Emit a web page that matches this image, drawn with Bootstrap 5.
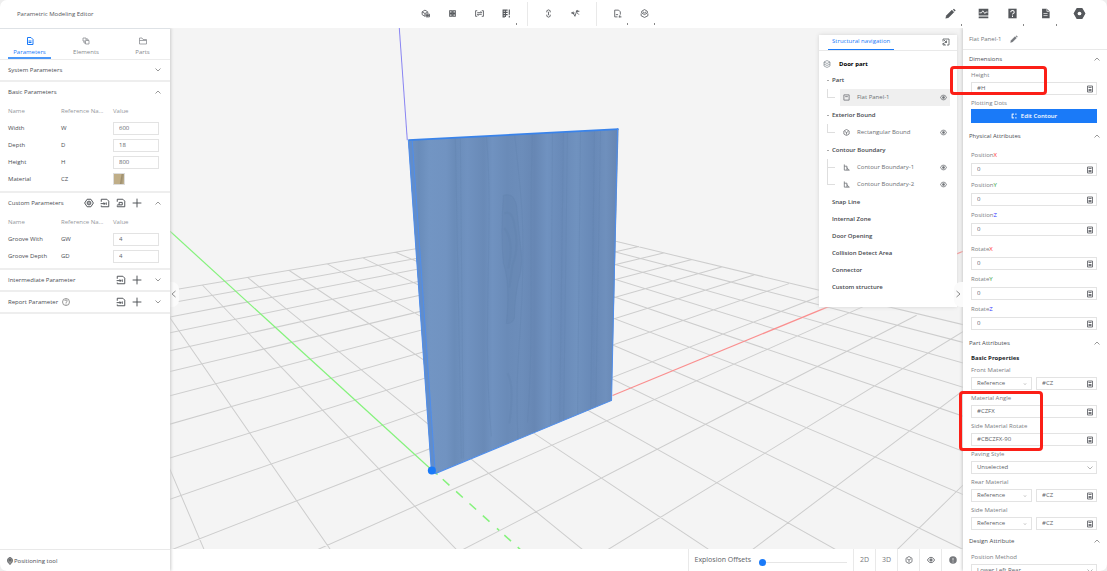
<!DOCTYPE html>
<html lang="en">
<head>
<meta charset="utf-8">
<meta name="viewport" content="width=device-width, initial-scale=1">
<title>Parametric Modeling Editor</title>
<link rel="stylesheet" href="https://cdn.jsdelivr.net/npm/bootstrap@5.3.0/dist/css/bootstrap.min.css">
<style>
:root{--ink:#4a4d52;--soft:#85888d;--line:#e8e8e8;--blue:#1a7af8}
body{font:6px/12px "Open Sans","Noto Sans",sans-serif;color:var(--ink);background:#eee}
button{border:0;background:none;padding:0;color:inherit;line-height:inherit}
a{color:inherit;text-decoration:none}
label{display:block}
svg.ic{width:10px;height:10px;fill:none;stroke:currentColor;stroke-width:1.5;flex:none;display:block}
svg.ic-sm{width:8px;height:8px}
svg.ic-lg{width:13px;height:13px}
.app{height:100vh;border-radius:7px;background:#fff}
.topbar{height:28px;color:#55585c}
.app-title{flex:0 0 38%;padding-left:17px;font-size:6px}
.tools{gap:18px}
.tools svg.ic{width:9px;height:9px}
.tools .sep{width:1px;height:24px;background:#e9e9e9;margin:0 -2px}
.tool{position:relative}
.tool.more::after{content:"";position:absolute;right:-6px;bottom:-7px;width:1px;height:2px;background:#888}
.tools-end{gap:18px;padding-right:21px}
.tools-end svg.ic{width:11px;height:11px}
.tools-end svg.ic-lg{width:13px;height:13px}
.side{width:170px;background:#fff;z-index:2;box-shadow:1px 0 3px #ccc}
.tabs{height:31px;border-bottom:1px solid #ececec;padding:0 6px 0 8px}
.tab{width:43px;color:var(--soft);border-bottom:2px solid transparent}
.tab.on{color:var(--blue);border-color:#4a97f8}
.tab svg.ic{margin:0 auto 1px;width:8px;height:8px}
.sect{border-bottom:2px solid #eeeeee}
.sect.filled{padding-bottom:3px}
.sect-h{height:20px;padding:0 8px}
.sect-h > .ic-sm{color:#777}
.sect-h .acts{gap:6px}
.ptable{table-layout:fixed;width:100%;margin:1px 0 0}
.ptable th,.ptable td{height:17px;padding:0;vertical-align:middle;font-weight:400}
.ptable th:first-child,.ptable td:first-child{padding-left:8px}
.ptable th:first-child{width:61px}
.ptable th:nth-child(2){width:52px}
.ptable thead th{color:#94979c}
.field{width:100%;height:13px;border:1px solid #e3e3e3;border-radius:0;padding:0 5px;background:#fff;color:#606368;font:6px/11px "Open Sans","Noto Sans",sans-serif;outline:0;appearance:none}
.ptable .field{width:46px;display:block}
.swatch{width:12px;height:12px;border:1px solid #ddd;background:linear-gradient(100deg,#c0ae88 60%,#9c8d6c 70%,#c4b593);display:block}
.side-foot{height:22px;border-top:1px solid #e9e9e9;padding-left:6px}
.stage{background:#f4f4f4;min-height:0}
.scene{position:absolute;inset:0;width:100%;height:100%}
.handle{position:absolute;top:254px;width:9px;height:25px;background:#fbfbfb;color:#666;z-index:1}
.handle.l{left:0;border-radius:0 7px 7px 0}
.handle.r{right:0;border-radius:7px 0 0 7px;z-index:4}
.navbox{position:absolute;right:6px;top:7px;width:138px;height:272px;background:#fff;box-shadow:0 0 4px #d4d4d4;z-index:3}
.navbox-h{height:16px;border-bottom:1px solid #e9e9e9;padding:0 7px 0 9px}
.navbox-h a{height:16px;line-height:14px;padding:0 4px;color:var(--blue);border-bottom:1px solid var(--blue)}
.tree{padding:5px 7px 0 4px}
.tree ul{list-style:none;margin:0;padding:0}
.tree > ul{margin-top:-1px}
.tree .row-t{height:17px;line-height:17px}
.grp{padding-left:9px;font-weight:600;color:#44474c}
.grp.open::before{content:"";width:2px;height:1px;background:#aaa;position:absolute;left:4px;top:8px}
.kids{margin:0 0 1px 4px!important}
.kids li{border-left:1px solid #dedede;position:relative}
.kids li:last-child{border-color:transparent}
.kids li::before{content:"";position:absolute;left:-1px;top:0;width:8px;height:9px;border-bottom:1px solid #dedede}
.kids li:last-child::before{border-left:1px solid #dedede}
.leaf{margin-left:12px;padding:0 3px;color:#6c6f74}
.leaf svg.ic-sm{width:7px;height:7px}
.leaf svg:first-child{margin-right:7px}
.leaf.on{background:#efefef}
.props{width:144px;background:#fff;z-index:2;box-shadow:-1px 0 3px #ccc;padding-top:2px}
.props .head{height:20px;padding-left:6px;border-bottom:1px solid #e9e9e9;color:#74777c}
.props .sect-p{height:18px;padding:0 6px}
.props .sect-p .ic{color:#777}
.pf{padding:0 10px 0 8px;color:#7a7d82}
.pf .box{position:relative}
.pf .box .ic{position:absolute;right:3px;top:3px;color:#66696e}
.pf .box .ic.caret{color:#999}
.tight label{margin-bottom:1px}
.tight .pf{margin-bottom:2px}
.tight.first{padding-top:1px}
.wide{padding-top:3px}
.wide label{line-height:15px}
.wide .pf{margin-bottom:2px}
.axx{color:#f33}.axy{color:#2a9c35}.axz{color:#33f}
.bluebtn{width:100%;height:14px;background:var(--blue);color:#fff;font-weight:600;line-height:14px}
.bluebtn svg.ic{width:6px;height:6px}
.note{position:absolute;border:3px solid #fb1f17;border-radius:4px;z-index:5;pointer-events:none}
.note-a{right:60px;top:66px;width:97px;height:29px}
.note-b{right:64px;top:391px;width:84px;height:60px}
.foot{height:22px;background:#fff;box-shadow:0 -1px 0 #e8e8e8}
.foot .cell{border-left:1px solid #e9e9e9;width:22px;height:22px;color:#77797d;font-size:7px}
.foot .slide{border-left:1px solid #e9e9e9;padding:0 6px;font-size:7px;gap:8px;line-height:22px;color:#606368}
input[type=range]{appearance:none;width:88px;height:8px;background:linear-gradient(#e6e6e6,#e6e6e6) center/100% 1px no-repeat;margin:4px 0 0}
input[type=range]::-webkit-slider-thumb{appearance:none;width:7px;height:7px;border-radius:50%;background:var(--blue)}
</style>
</head>
<body>
<svg class="d-none">
<symbol id="down" viewBox="0 0 16 16"><path d="M3 5l5 5 5-5"/></symbol>
<symbol id="up" viewBox="0 0 16 16"><path d="M3 11l5-5 5 5"/></symbol>
<symbol id="left" viewBox="0 0 16 16"><path d="M11 2L4 8l7 6"/></symbol>
<symbol id="right" viewBox="0 0 16 16"><path d="M5 2l7 6-7 6"/></symbol>
<symbol id="plus" viewBox="0 0 16 16"><path d="M8 1v14M1 8h14"/></symbol>
<symbol id="doc" viewBox="0 0 16 16"><path d="M3 1h7l4 4v10H3zM5 8h6M5 11h6" stroke-width="2"/></symbol>
<symbol id="elem" viewBox="0 0 16 16"><path d="M6 8H2V2h6v4M7 7h7v7H7zM8 4h4v3M4 8v4h3"/></symbol>
<symbol id="folder" viewBox="0 0 16 16"><path d="M1 14V2h5l2 3h7v9zM1 7h14"/></symbol>
<symbol id="target" viewBox="0 0 16 16"><path d="M5 2h6l4 6-4 6H5L1 8z"/><circle cx="8" cy="8" r="3"/><circle cx="8" cy="8" r=".7"/></symbol>
<symbol id="import" viewBox="0 0 16 16"><path d="M2 6V2h9l3 3v9H2v-2M1 9h7M10 7v4M6 7l2 2-2 2"/></symbol>
<symbol id="export" viewBox="0 0 16 16"><path d="M2 6V2h9l3 3v9H2v-2M5 11V7h5v4H2"/></symbol>
<symbol id="help" viewBox="0 0 16 16"><circle cx="8" cy="8" r="7"/><path d="M5.500 6c0-3 5-3 5 0 0 2-2.500 1.500-2.500 4M8 11v2"/></symbol>
<symbol id="cube" viewBox="0 0 16 16"><path d="M8 1l6 3.500v7L8 15l-6-3.500v-7zM4 5.500L8 8l4-2.500M8 8v5" stroke-width="1.800"/></symbol>
<symbol id="cubes" viewBox="0 0 16 16"><path d="M7 13l-5-3V5l5-3 5 3v3M2 5l5 3 4-2M7 8v5"/><path d="M9 9h6v5H9zM9 11.500h6M12 9v5"/></symbol>
<symbol id="four" viewBox="0 0 16 16"><path d="M3 3h4v4H3zM9 3h4v4H9zM3 9h4v4H3zM9 9h4v4H9z" stroke-width="1.800"/></symbol>
<symbol id="vars" viewBox="0 0 16 16"><path d="M4 3H1v10h3M12 3h3v10h-3M4 6.500h8M4 9.500h8M10 4l2 2.500M6 12L4 9.500"/></symbol>
<symbol id="rows" viewBox="0 0 16 16"><path d="M1 2h9M1 6h9M1 10h9M2 2v12h3M6 2v12M13 1v9M13 12v3" stroke-width="2"/></symbol>
<symbol id="chain" viewBox="0 0 16 16"><path d="M5 6V3l3-1.500L11 3v3M5 10v3l3 1.500 3-1.500v-3M8 5v6"/></symbol>
<symbol id="wave" viewBox="0 0 16 16"><path d="M0 7h4l3 6 3-9h5"/><circle cx="4" cy="7" r="1.500"/><circle cx="11" cy="4" r="1.500"/><path d="M11 7l3 3"/></symbol>
<symbol id="docplus" viewBox="0 0 16 16"><path d="M8 14H3V2h7l3 3v5M5 10h4M12 11v4M10 14h5"/></symbol>
<symbol id="stack" viewBox="0 0 16 16"><path d="M8 1l5 3v3L8 10 3 7V4zM5 5l3 2 3-2M2 8v4l6 3 6-3V8"/></symbol>
<symbol id="layers" viewBox="0 0 16 16"><path d="M8 1l6 3-6 3-6-3zM2 8l6 3 6-3M2 12l6 3 6-3M2 4v8M14 4v8" stroke-width="1.200"/></symbol>
<symbol id="pen" viewBox="0 0 16 16"><path d="M1 15l1-4 8-8 3 3-8 8z" fill="currentColor" stroke-width=".5"/><path d="M11.500 2l1.500-1 2.500 2.500L14 5z" fill="currentColor" stroke="none"/></symbol>
<symbol id="monitor" viewBox="0 0 16 16"><path d="M1 1h14v10H1zM1 12.500h14V15H1z" fill="currentColor" stroke="none"/><path d="M2 7h3l2-3 3 4 1.500-2H14" stroke="#fff" stroke-width="1.300"/></symbol>
<symbol id="qbox" viewBox="0 0 16 16"><path d="M2 1h12v14H2z" fill="currentColor" stroke="none"/><path d="M5.500 6c0-3.500 5-3 5 0 0 2-2.500 1.500-2.500 3.500M8 11v2" stroke="#fff"/></symbol>
<symbol id="file" viewBox="0 0 16 16"><path d="M3 1h7l4 4v10H3z" fill="currentColor" stroke="none"/><path d="M10 1v4h4M5 8h6M5 11h6" stroke="#fff" stroke-width="1"/></symbol>
<symbol id="nut" viewBox="0 0 16 16"><path d="M5 2h6l3.500 6L11 14H5L1.500 8z" fill="currentColor"/><circle cx="8" cy="8" r="2.300" fill="#fff" stroke="none"/></symbol>
<symbol id="calc" viewBox="0 0 16 16"><path d="M3 2h10v12H3zM5 5h6M5 9h6M5 11h6" stroke-width="1.800"/></symbol>
<symbol id="panel" viewBox="0 0 16 16"><path d="M2 2h12v12H2zM5 6h6" stroke-width="1.800"/></symbol>
<symbol id="contour" viewBox="0 0 16 16"><path d="M3 1v13h12M3 5h6v9M9 8l4 6" stroke-width="1.800"/></symbol>
<symbol id="eye" viewBox="0 0 16 16"><path d="M1 8c3-7 11-7 14 0-3 7-11 7-14 0z" stroke-width="2"/><circle cx="8" cy="8" r="2.500" fill="currentColor"/></symbol>
<symbol id="dock" viewBox="0 0 16 16"><path d="M2 7V2h12v12h-4M4 4l5 5M9 5v4H5M2 10l5 4H2z"/></symbol>
<symbol id="pin" viewBox="0 0 16 16"><path d="M8 15C0 9 3 1 8 1s8 8 0 14z" fill="#999"/><circle cx="8" cy="6" r="2"/></symbol>
<symbol id="info" viewBox="0 0 16 16"><circle cx="8" cy="8" r="7.500" fill="currentColor" stroke="none"/><path d="M8 4v5M8 11v2" stroke="#fff"/></symbol>
<symbol id="dots" viewBox="0 0 16 16"><path d="M3 2v12M3 3h5M3 13h5M11 3h4M11 13h4" stroke-width="2.500"/></symbol>
<symbol id="dot" viewBox="0 0 16 16"><path d="M6 7l2 2 2-2"/></symbol>
</svg>

<div class="app position-relative d-flex flex-column overflow-hidden">
  <header class="topbar d-flex align-items-center">
    <div class="app-title">Parametric Modeling Editor</div>
    <div class="tools d-flex align-items-center">
      <button class="tool" aria-label="Models"><svg class="ic"><use href="#cubes"/></svg></button>
      <button class="tool" aria-label="Grid"><svg class="ic"><use href="#four"/></svg></button>
      <button class="tool" aria-label="Variables"><svg class="ic"><use href="#vars"/></svg></button>
      <button class="tool more" aria-label="Align"><svg class="ic"><use href="#rows"/></svg></button>
      <span class="sep"></span>
      <button class="tool" aria-label="Link"><svg class="ic"><use href="#chain"/></svg></button>
      <button class="tool" aria-label="Curve"><svg class="ic"><use href="#wave"/></svg></button>
      <span class="sep"></span>
      <button class="tool more" aria-label="New"><svg class="ic"><use href="#docplus"/></svg></button>
      <button class="tool more" aria-label="Stack"><svg class="ic"><use href="#stack"/></svg></button>
    </div>
    <div class="tools-end d-flex align-items-center ms-auto">
      <button class="tool more me-1" aria-label="Edit"><svg class="ic"><use href="#pen"/></svg></button>
      <button class="tool" aria-label="Monitor"><svg class="ic"><use href="#monitor"/></svg></button>
      <button class="tool more me-1" aria-label="Help"><svg class="ic"><use href="#qbox"/></svg></button>
      <button class="tool more me-1" aria-label="File"><svg class="ic"><use href="#file"/></svg></button>
      <button class="tool" aria-label="Settings"><svg class="ic ic-lg"><use href="#nut"/></svg></button>
    </div>
  </header>

  <div class="d-flex flex-grow-1 overflow-hidden">
    <aside class="side d-flex flex-column flex-shrink-0 border-top">
      <nav class="tabs d-flex justify-content-between align-items-stretch text-center">
        <a href="#" class="tab on pt-2"><svg class="ic"><use href="#doc"/></svg>Parameters</a>
        <a href="#" class="tab pt-2"><svg class="ic"><use href="#elem"/></svg>Elements</a>
        <a href="#" class="tab pt-2"><svg class="ic"><use href="#folder"/></svg>Parts</a>
      </nav>
      <section class="sect">
        <div class="sect-h d-flex align-items-center justify-content-between">System Parameters<svg class="ic ic-sm"><use href="#down"/></svg></div>
      </section>
      <section class="sect filled">
        <div class="sect-h d-flex align-items-center justify-content-between">Basic Parameters<svg class="ic ic-sm"><use href="#up"/></svg></div>
        <table class="ptable">
          <thead><tr><th>Name</th><th>Reference Na...</th><th>Value</th></tr></thead>
          <tbody>
            <tr><td>Width</td><td>W</td><td><input class="field" aria-label="Width" value="600"></td></tr>
            <tr><td>Depth</td><td>D</td><td><input class="field" aria-label="Depth" value="18"></td></tr>
            <tr><td>Height</td><td>H</td><td><input class="field" aria-label="Height" value="800"></td></tr>
            <tr><td>Material</td><td>CZ</td><td><button class="swatch" aria-label="Material"></button></td></tr>
          </tbody>
        </table>
      </section>
      <section class="sect filled">
        <div class="sect-h d-flex align-items-center">Custom Parameters
          <span class="acts d-flex align-items-center ms-auto me-2 pe-1"><svg class="ic"><use href="#target"/></svg><svg class="ic"><use href="#import"/></svg><svg class="ic"><use href="#export"/></svg><svg class="ic"><use href="#plus"/></svg></span>
          <svg class="ic ic-sm"><use href="#up"/></svg></div>
        <table class="ptable">
          <thead><tr><th>Name</th><th>Reference Na...</th><th>Value</th></tr></thead>
          <tbody>
            <tr><td>Groove With</td><td>GW</td><td><input class="field" aria-label="Groove With" value="4"></td></tr>
            <tr><td>Groove Depth</td><td>GD</td><td><input class="field" aria-label="Groove Depth" value="4"></td></tr>
          </tbody>
        </table>
      </section>
      <section class="sect">
        <div class="sect-h d-flex align-items-center">Intermediate Parameter
          <span class="acts d-flex align-items-center ms-auto me-2 pe-1"><svg class="ic"><use href="#import"/></svg><svg class="ic"><use href="#plus"/></svg></span>
          <svg class="ic ic-sm"><use href="#down"/></svg></div>
      </section>
      <section class="sect">
        <div class="sect-h d-flex align-items-center">Report Parameter<svg class="ic ic-sm ms-1"><use href="#help"/></svg>
          <span class="acts d-flex align-items-center ms-auto me-2 pe-1"><svg class="ic"><use href="#import"/></svg><svg class="ic"><use href="#plus"/></svg></span>
          <svg class="ic ic-sm"><use href="#down"/></svg></div>
      </section>
      <a href="#" class="side-foot d-flex align-items-center mt-auto"><svg class="ic ic-sm"><use href="#pin"/></svg>Positioning tool</a>
    </aside>

    <main class="flex-grow-1 d-flex flex-column overflow-hidden">
      <div class="stage position-relative flex-grow-1 overflow-hidden">
        <svg class="scene" viewBox="0 0 792 521" preserveAspectRatio="xMidYMin slice">
          <defs>
            <linearGradient id="wood" x1="0" x2="1" y1="0" y2="0">
              <stop offset="0" stop-color="#7092c0"/><stop offset=".05" stop-color="#698cba"/><stop offset=".1" stop-color="#7295c3"/><stop offset=".18" stop-color="#7193c1"/><stop offset=".22" stop-color="#6a8cb9"/><stop offset=".28" stop-color="#7092c0"/><stop offset=".36" stop-color="#698ab7"/><stop offset=".4" stop-color="#7092c0"/><stop offset=".47" stop-color="#6a8bb8"/><stop offset=".54" stop-color="#6c8dba"/><stop offset=".6" stop-color="#6787b4"/><stop offset=".66" stop-color="#7092c0"/><stop offset=".73" stop-color="#698ab8"/><stop offset=".8" stop-color="#7092bf"/><stop offset=".88" stop-color="#6889b7"/><stop offset=".94" stop-color="#6f90bd"/><stop offset="1" stop-color="#6685b1"/>
            </linearGradient>
            <clipPath id="face"><path d="M242 113L448 101 441 372 265 445z"/></clipPath>
          </defs>
          <g id="grid" fill="none" stroke="#cdcdcd" stroke-width="1"></g>
          <path d="M229 0L237 112" stroke="#8a85f2"/>
          <path d="M0 203L262 442" stroke="#85f27c" stroke-width="1.200"/>
          <path d="M442 367L792 223" stroke="#fa8f8f" stroke-width="1.200"/>
          <path d="M265 444L350 521" stroke="#85f27c" stroke-width="1.500" stroke-dasharray="3 7 9 9 9 9 9 9 9 10"/>
          <path d="M238 112L448 101 441 372 265 445 261 442z" fill="url(#wood)"/>
          <path d="M238 112L242 113 265 445 261 442z" fill="#638dc8"/>
          <g clip-path="url(#face)" fill="none" stroke="#5f80ad" stroke-opacity=".3">
            <path d="M285 110l6 320M290 110l3 320M316 108c8 90-5 190 5 300M344 104c6 60 10 80 8 150s-8 80-4 170M362 104c-4 110 2 200-5 290M382 103l-2 300M393 103l-4 300M397 103l-4 300M410 102l-3 290M424 102l-4 290M430 102l-5 290"/>
            <path d="M333 167q10-3 13 10 2 20 4 40 3 20-2 35-4 20-4 38-3 6-8 5 4-40-3-60-3-30 0-68z" fill="#5f80ad" fill-opacity=".25"/>
            <path d="M334 185q8-3 10 12 5 22-2 40-2 15-3 22M334 200q10 12 4 40M337 345q7 10 2 50" stroke-width="2"/>
          </g>
          <path d="M238 112L448 101" stroke="#3983ea" stroke-width="1.800"/>
          <path d="M447 100L441 372 265 445 261 442 238 112M242 113L265 445" fill="none" stroke="#4f8eec" stroke-width="1"/>
          <circle cx="261.500" cy="442" r="4" fill="#1a7af8"/>
        </svg>
        <button class="handle l" aria-label="Collapse left panel"><svg class="ic ic-sm"><use href="#left"/></svg></button>
        <button class="handle r" aria-label="Collapse right panel"><svg class="ic ic-sm"><use href="#right"/></svg></button>

        <div class="navbox">
          <div class="navbox-h d-flex align-items-center justify-content-between"><a href="#">Structural navigation</a><svg class="ic ic-sm"><use href="#dock"/></svg></div>
          <div class="tree">
            <div class="row-t d-flex align-items-center fw-bold text-black"><svg class="ic ic-sm me-2 text-secondary"><use href="#layers"/></svg>Door part</div>
            <ul>
              <li class="position-relative"><div class="row-t grp open">Part</div>
                <ul class="kids"><li><div class="row-t leaf on d-flex align-items-center"><svg class="ic ic-sm"><use href="#panel"/></svg>Flat Panel-1<svg class="ic ic-sm ms-auto"><use href="#eye"/></svg></div></li></ul></li>
              <li class="position-relative"><div class="row-t grp open">Exterior Bound</div>
                <ul class="kids"><li><div class="row-t leaf d-flex align-items-center"><svg class="ic ic-sm"><use href="#cube"/></svg>Rectangular Bound<svg class="ic ic-sm ms-auto"><use href="#eye"/></svg></div></li></ul></li>
              <li class="position-relative"><div class="row-t grp open">Contour Boundary</div>
                <ul class="kids">
                  <li><div class="row-t leaf d-flex align-items-center"><svg class="ic ic-sm"><use href="#contour"/></svg>Contour Boundary-1<svg class="ic ic-sm ms-auto"><use href="#eye"/></svg></div></li>
                  <li><div class="row-t leaf d-flex align-items-center"><svg class="ic ic-sm"><use href="#contour"/></svg>Contour Boundary-2<svg class="ic ic-sm ms-auto"><use href="#eye"/></svg></div></li></ul></li>
              <li class="row-t grp">Snap Line</li>
              <li class="row-t grp">Internal Zone</li>
              <li class="row-t grp">Door Opening</li>
              <li class="row-t grp">Collision Detect Area</li>
              <li class="row-t grp">Connector</li>
              <li class="row-t grp">Custom structure</li>
            </ul>
          </div>
        </div>
      </div>
      <footer class="foot d-flex align-items-stretch justify-content-end flex-shrink-0">
        <div class="slide d-flex align-items-center"><label for="explode">Explosion Offsets</label><input id="explode" type="range" min="0" max="100" value="0"></div>
        <button class="cell">2D</button>
        <button class="cell">3D</button>
        <button class="cell d-flex align-items-center justify-content-center" aria-label="View cube"><svg class="ic ic-sm"><use href="#cube"/></svg></button>
        <button class="cell d-flex align-items-center justify-content-center" aria-label="Visibility"><svg class="ic ic-sm"><use href="#eye"/></svg></button>
        <button class="cell d-flex align-items-center justify-content-center" aria-label="Info"><svg class="ic ic-sm"><use href="#info"/></svg></button>
      </footer>
    </main>

    <aside class="props flex-shrink-0 overflow-hidden">
      <div class="head d-flex align-items-center">Flat Panel-1<svg class="ic ic-sm ms-2"><use href="#pen"/></svg></div>
      <div class="sect-p d-flex align-items-center justify-content-between">Dimensions<svg class="ic ic-sm"><use href="#up"/></svg></div>
      <div class="tight first">
        <div class="pf"><label for="h">Height</label><div class="box"><input id="h" class="field" value="#H"><svg class="ic ic-sm"><use href="#calc"/></svg></div></div>
        <div class="pf">Plotting Dots<button class="bluebtn d-flex align-items-center justify-content-center"><svg class="ic me-1"><use href="#dots"/></svg>Edit Contour</button></div>
      </div>
      <div class="sect-p d-flex align-items-center justify-content-between mt-1">Physical Attributes<svg class="ic ic-sm"><use href="#up"/></svg></div>
      <div class="wide">
        <div class="pf"><label for="px">Position<span class="axx">X</span></label><div class="box"><input id="px" class="field" value="0"><svg class="ic ic-sm"><use href="#calc"/></svg></div></div>
        <div class="pf"><label for="py">Position<span class="axy">Y</span></label><div class="box"><input id="py" class="field" value="0"><svg class="ic ic-sm"><use href="#calc"/></svg></div></div>
        <div class="pf"><label for="pz">Position<span class="axz">Z</span></label><div class="box"><input id="pz" class="field" value="0"><svg class="ic ic-sm"><use href="#calc"/></svg></div></div>
        <div class="pf pt-1"><label for="rx">Rotate<span class="axx">X</span></label><div class="box"><input id="rx" class="field" value="0"><svg class="ic ic-sm"><use href="#calc"/></svg></div></div>
        <div class="pf"><label for="ry">Rotate<span class="axy">Y</span></label><div class="box"><input id="ry" class="field" value="0"><svg class="ic ic-sm"><use href="#calc"/></svg></div></div>
        <div class="pf"><label for="rz">Rotate<span class="axz">Z</span></label><div class="box"><input id="rz" class="field" value="0"><svg class="ic ic-sm"><use href="#calc"/></svg></div></div>
      </div>
      <div class="sect-p d-flex align-items-center justify-content-between mt-1">Part Attributes<svg class="ic ic-sm"><use href="#up"/></svg></div>
      <div class="pf fw-bold text-dark">Basic Properties</div>
      <div class="tight">
        <div class="pf"><label for="fm">Front Material</label><div class="d-flex gap-1"><div class="box w-50"><select id="fm" class="field"><option>Reference</option></select><svg class="ic ic-sm caret"><use href="#dot"/></svg></div><div class="box w-50"><input class="field" aria-label="Front material value" value="#CZ"><svg class="ic ic-sm"><use href="#calc"/></svg></div></div></div>
        <div class="pf"><label for="ma">Material Angle</label><div class="box"><input id="ma" class="field" value="#CZFX"><svg class="ic ic-sm"><use href="#calc"/></svg></div></div>
        <div class="pf"><label for="sr">Side Material Rotate</label><div class="box"><input id="sr" class="field" value="#CBCZFX-90"><svg class="ic ic-sm"><use href="#calc"/></svg></div></div>
        <div class="pf"><label for="ps">Paving Style</label><div class="box"><select id="ps" class="field"><option>Unselected</option></select><svg class="ic ic-sm caret"><use href="#down"/></svg></div></div>
        <div class="pf"><label for="rm">Rear Material</label><div class="d-flex gap-1"><div class="box w-50"><select id="rm" class="field"><option>Reference</option></select><svg class="ic ic-sm caret"><use href="#dot"/></svg></div><div class="box w-50"><input class="field" aria-label="Rear material value" value="#CZ"><svg class="ic ic-sm"><use href="#calc"/></svg></div></div></div>
        <div class="pf"><label for="sm">Side Material</label><div class="d-flex gap-1"><div class="box w-50"><select id="sm" class="field"><option>Reference</option></select><svg class="ic ic-sm caret"><use href="#dot"/></svg></div><div class="box w-50"><input class="field" aria-label="Side material value" value="#CZ"><svg class="ic ic-sm"><use href="#calc"/></svg></div></div></div>
      </div>
      <div class="sect-p d-flex align-items-center justify-content-between">Design Attribute<svg class="ic ic-sm"><use href="#up"/></svg></div>
      <div class="tight first"><div class="pf"><label for="pm">Position Method</label><div class="box"><select id="pm" class="field"><option>Lower Left Rear</option></select><svg class="ic ic-sm caret"><use href="#down"/></svg></div></div></div>
    </aside>
  </div>
  <div class="note note-a"></div>
  <div class="note note-b"></div>
</div>
<script src="https://cdn.jsdelivr.net/npm/bootstrap@5.3.0/dist/js/bootstrap.bundle.min.js"></script>
<script>
// Ground grid in perspective: each edge is sampled projectively, p(k) = (a + b k) / (1 + c k).
const proj = (a, b, c, k) => (a + b * k) / (1 + c * k);
const pt = (x, y) => [x / 2.412, y / 3];
const at = (p, q, t) => [p[0] + (q[0] - p[0]) * t, p[1] + (q[1] - p[1]) * t];
let d = '';
const seg = (p, q) => { d += `M${p[0].toFixed(1)} ${p[1].toFixed(1)}L${q[0].toFixed(1)} ${q[1].toFixed(1)}`; };
for (let i = -11; i <= 4; i++) {
  const xl = proj(590, 39.1, -.0952, i), xr = proj(1686, 23.3, -.0497, i);
  const l = pt(xl, 1433 + 1.295 * (xl - 590)), r = pt(xr, 826 + .308 * (xr - 1686));
  seg(at(l, r, -1), r);
}
for (let j = -3; j <= 11; j++) {
  const xt = proj(78, 117.15, .0436, j), xb = proj(590, 242.8, .0843, j);
  const t = pt(xt, 770 - .2077 * (xt - 78)), b = pt(xb, 1433 - .553 * (xb - 590));
  seg(t, at(t, b, 4));
}
document.getElementById('grid').innerHTML = `<path d="${d}"/>`;
</script>
</body>
</html>
